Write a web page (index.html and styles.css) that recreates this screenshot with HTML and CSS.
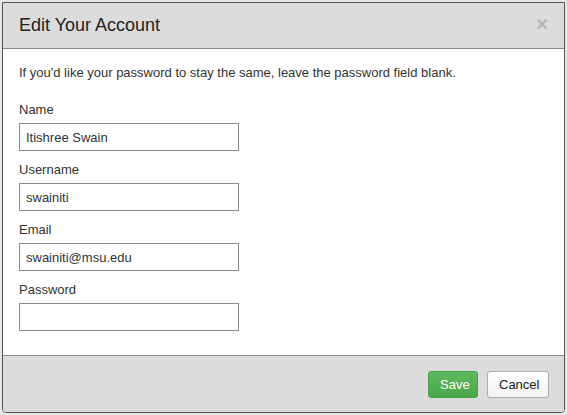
FILE: index.html
```html
<!DOCTYPE html>
<html>
<head>
<meta charset="utf-8">
<link rel="stylesheet" href="styles.css">
</head>
<body>
<div class="modal">
  <div class="modal-header">
    <h3 class="title">Edit Your Account</h3>
    <span class="close">&times;</span>
  </div>
  <div class="modal-body">
    <p class="note">If you'd like your password to stay the same, leave the password field blank.</p>
    <div class="group">
      <label class="lbl">Name</label>
      <input class="field" type="text" value="Itishree Swain">
    </div>
    <div class="group">
      <label class="lbl">Username</label>
      <input class="field" type="text" value="swainiti">
    </div>
    <div class="group">
      <label class="lbl">Email</label>
      <input class="field" type="text" value="swainiti@msu.edu">
    </div>
    <div class="group">
      <label class="lbl">Password</label>
      <input class="field" type="password" value="">
    </div>
  </div>
  <div class="modal-footer">
    <button class="btn btn-save">Save</button>
    <button class="btn btn-cancel">Cancel</button>
  </div>
</div>
</body>
</html>
```
FILE: styles.css
```css
html, body {
  margin: 0;
  padding: 0;
  background: #e6e6e6;
  font-family: "Liberation Sans", Arial, sans-serif;
  color: #333;
}
body {
  padding: 2px 2px 0 2px;
}
.modal {
  width: 563px;
  height: 411px;
  box-sizing: border-box;
  border: 1px solid #555;
  border-radius: 0 0 4px 4px;
  display: flex;
  flex-direction: column;
  background: #fff;
  overflow: hidden;
}
.modal-header {
  height: 46px;
  box-sizing: border-box;
  background: #dcdcdc;
  border-bottom: 1px solid #8a8a8a;
  display: flex;
  align-items: center;
  justify-content: space-between;
  padding: 0 16px 0 16px;
}
.title {
  margin: 0;
  font-size: 18px;
  font-weight: normal;
  color: #222;
}
.close {
  font-size: 20px;
  font-weight: bold;
  color: #b3b3b3;
  line-height: 1;
  margin-top: -4px;
}
.modal-body {
  flex: 1;
  padding: 15px 15px 0 16px;
}
.note {
  margin: 0 0 19px 0;
  font-size: 13px;
  line-height: 18px;
}
.group {
  display: flex;
  flex-direction: column;
  align-items: flex-start;
  margin-bottom: 10px;
}
.lbl {
  font-size: 13px;
  line-height: 18px;
  margin-bottom: 4px;
}
.field {
  width: 220px;
  height: 28px;
  box-sizing: border-box;
  border: 1px solid #8a8a8a;
  padding: 0 6px;
  font-family: "Liberation Sans", Arial, sans-serif;
  font-size: 13px;
  color: #333;
  background: #fff;
  margin: 0;
}
.modal-footer {
  height: 57px;
  box-sizing: border-box;
  background: #dcdcdc;
  border-top: 1px solid #8a8a8a;
  display: flex;
  justify-content: flex-end;
  align-items: flex-start;
  gap: 9px;
  padding: 15px 15px 0 0;
}
.btn {
  height: 27px;
  box-sizing: border-box;
  border-radius: 3px;
  font-family: "Liberation Sans", Arial, sans-serif;
  font-size: 13px;
  padding: 0 11px;
  margin: 0;
}
.btn-save {
  width: 50px;
  background: linear-gradient(#5fba5f, #4aa64a);
  border: 1px solid #46a046;
  color: #fff;
}
.btn-cancel {
  width: 62px;
  background: linear-gradient(#ffffff, #f3f3f3);
  border: 1px solid #adadad;
  color: #222;
}
```
